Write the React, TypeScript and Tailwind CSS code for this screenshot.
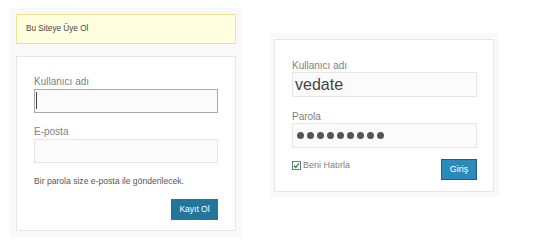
import React from "react";

export default function App() {
  return (
    <div className="w-[560px] h-[247px] bg-white flex items-start font-['Liberation_Sans',Arial,sans-serif]">
      {/* Left: register */}
      <div className="ml-[10px] mt-[8px] w-[232px] h-[229px] bg-[#f9f9f9] p-[6px] flex flex-col gap-[12px]">
        <div className="h-[30px] border border-[#ebe38e] bg-[#ffffe0] px-[9px] flex items-center text-[8.2px] text-[#444]">
          Bu Siteye Üye Ol
        </div>
        <div className="h-[176px] bg-white border border-[#e6e6e6] pt-[17px] px-[17px] flex flex-col">
          <div className="text-[10px] leading-[15px] h-[15px] text-[#808080]">Kullanıcı adı</div>
          <div className="h-[24px] border border-[#a8a8a8] bg-[#fbfbfb] flex items-center pl-[1px]">
            <div className="w-[1px] h-[17px] bg-[#444]" />
          </div>
          <div className="mt-[11px] text-[10px] leading-[15px] h-[15px] text-[#808080]">E-posta</div>
          <div className="h-[24px] border border-[#e6e6e6] bg-[#fbfbfb]" />
          <div className="mt-[12px] text-[8.6px] leading-[12px] text-[#5a5560]">
            Bir parola size e-posta ile gönderilecek.
          </div>
          <div className="mt-[12px] self-end h-[21px] w-[47px] bg-[#22769c] text-white text-[8.5px] flex items-center justify-center">
            Kayıt Ol
          </div>
        </div>
      </div>

      {/* Right: login */}
      <div className="ml-[28px] mt-[33px] w-[229px] h-[164px] bg-[#f9f9f9] pt-[6px] pl-[4px] pr-[5px] pb-[5px] flex">
        <div className="w-[220px] h-[153px] bg-white border border-[#e6e6e6] pt-[20px] pl-[17px] pr-[16px] flex flex-col">
          <div className="text-[10px] leading-[12px] h-[12px] text-[#808080]">Kullanıcı adı</div>
          <div className="h-[25px] border border-[#e6e6e6] bg-[#fbfbfb] flex items-center pl-[2px] text-[16px] text-[#444]">
            vedate
          </div>
          <div className="mt-[14px] text-[10px] leading-[12px] h-[12px] text-[#808080]">Parola</div>
          <div className="h-[25px] border border-[#e6e6e6] bg-[#fbfbfb] flex items-center pl-[4px] gap-[3px]">
            {Array.from({ length: 9 }).map((_, i) => (
              <span key={i} className="w-[7px] h-[7px] rounded-full bg-[#555]" />
            ))}
          </div>
          <div className="mt-[11px] flex justify-between items-start">
            <div className="flex items-center gap-[2px] mt-[1px]">
              <svg width="9" height="9" viewBox="0 0 9 9">
                <rect x="0.5" y="0.5" width="8" height="8" fill="#fff" stroke="#5b7fa6" />
                <path d="M2 4.6 L3.8 6.4 L7 2.4" fill="none" stroke="#2a9d2a" strokeWidth="1.5" />
              </svg>
              <span className="text-[9px] leading-[10px] text-[#808080]">Beni Hatırla</span>
            </div>
            <div className="h-[21px] w-[36px] bg-[#2a8bba] border border-[#1c5f80] text-white text-[9px] flex items-center justify-center">
              Giriş
            </div>
          </div>
        </div>
      </div>
    </div>
  );
}
